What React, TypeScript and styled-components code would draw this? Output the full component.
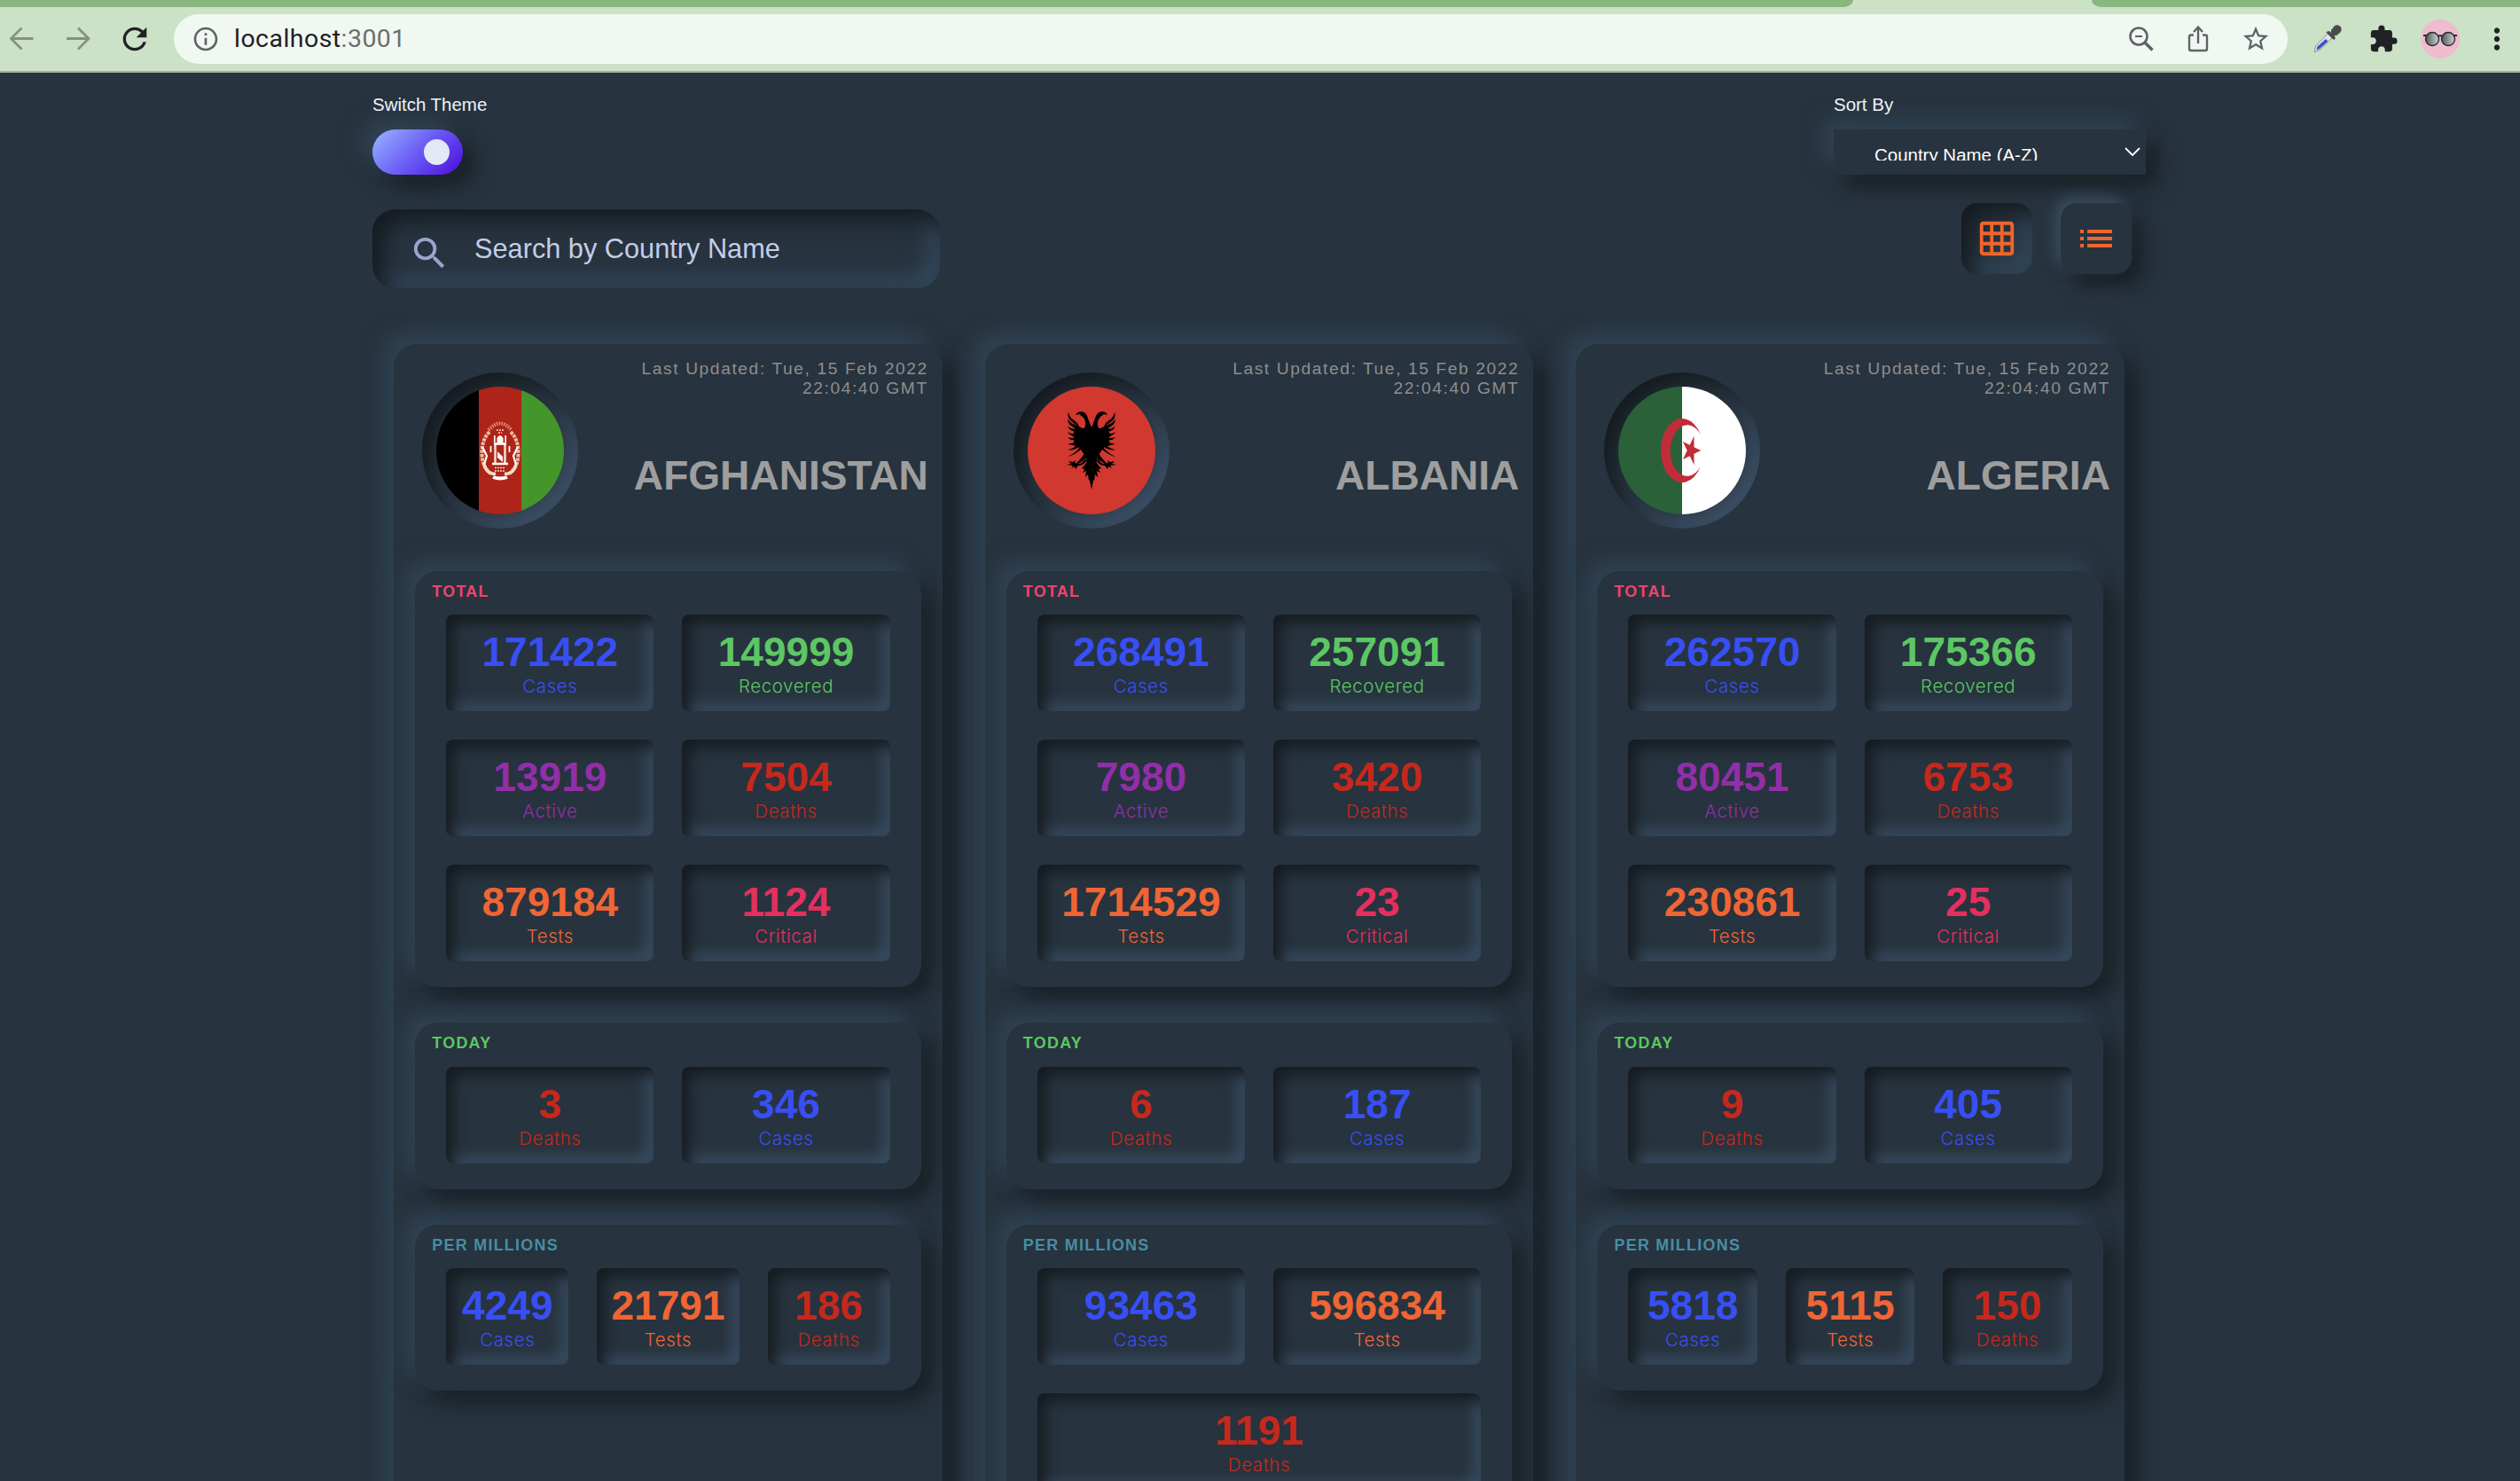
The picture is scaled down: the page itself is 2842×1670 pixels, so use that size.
import React from "react";
import styled, { createGlobalStyle } from "styled-components";
import { MdGridOn, MdList, MdSearch, MdRefresh, MdInfoOutline, MdStarBorder, MdExtension, MdMoreVert } from "react-icons/md";

const BG = "#27333e";
const LIGHT = "#34495e";
const DARK = "#151b20";
const UP = `-12px -12px 24px ${LIGHT}b8, 12px 12px 24px ${DARK}d8`;
const FONT = `"Liberation Sans", Helvetica, Arial, sans-serif`;

const Global = createGlobalStyle`
  * { box-sizing: border-box; }
  body { margin: 0; background: ${BG}; font-family: ${FONT}; }
`;
const Screen = styled.div`
  width: 2842px;
  height: 1670px;
  overflow: hidden;
  background: ${BG};
`;

/* browser chrome */
const TabStrip = styled.div`
  height: 8px;
  background: #cbe2c6;
  display: flex;
  justify-content: space-between;
`;
const TabLeft = styled.div`
  width: 2090px;
  background: #88b880;
  border-bottom-right-radius: 12px 8px;
`;
const TabRight = styled.div`
  width: 483px;
  background: #88b880;
  border-bottom-left-radius: 12px 8px;
`;
const Toolbar = styled.div`
  height: 74px;
  padding: 8px 7px 8px 7px;
  display: flex;
  align-items: center;
  background: #cbe2c6;
  border-bottom: 2px solid #9fb39c;
  svg { display: block; flex: none; }
`;
const NavIcons = styled.div`
  width: 189px;
  display: flex;
  align-items: center;
  gap: 26.5px;
`;
const Address = styled.div`
  width: 2384px;
  height: 56px;
  border-radius: 28px;
  background: #f1f8f1;
  display: flex;
  align-items: center;
  padding: 0 19px 0 20px;
  color: #5f6368;
`;
const Url = styled.div`
  flex: 1;
  margin-left: 16px;
  font: 28.5px/56px Roboto, sans-serif;
  letter-spacing: 0.45px;
  color: #202124;
  span { color: #6b706c; }
`;
const AddressIcons = styled.div`
  display: flex;
  align-items: center;
  gap: 32px;
`;
const Extensions = styled.div`
  flex: 1;
  display: flex;
  align-items: center;
  justify-content: space-between;
  padding-left: 28px;
  color: #202124;
`;
const Shift = styled.span`
  display: flex;
  margin: 0 -3px 0 3px;
`;

/* page */
const Page = styled.main`
  width: 2000px;
  margin-left: 420px;
  padding-top: 24px;
`;
const Row = styled.div`
  display: flex;
  justify-content: space-between;
`;
const Field = styled.div<{ $w: number }>`
  width: ${p => p.$w}px;
`;
const FieldLabel = styled.div`
  height: 40px;
  font-size: 20.48px;
  line-height: 24px;
  color: #eef3fb;
`;
const Toggle = styled.div`
  width: 102px;
  height: 51px;
  border-radius: 26px;
  display: flex;
  align-items: center;
  justify-content: flex-end;
  padding-right: 15px;
  background: linear-gradient(135deg, #95aeff 5%, #6a5cf5 50%, #4f12e0 95%);
  box-shadow: ${UP};
`;
const Knob = styled.div`
  width: 29px;
  height: 29px;
  border-radius: 50%;
  background: #e3e9f5;
`;
const Select = styled.div`
  height: 51px;
  padding: 20px 5px 0 46px;
  display: flex;
  justify-content: space-between;
  background: ${BG};
  box-shadow: ${UP};
  color: #fff;
`;
const SelectText = styled.div`
  height: 15px;
  overflow: hidden;
  font-size: 20.48px;
  line-height: 18px;
`;
const SearchBox = styled.div`
  width: 640px;
  height: 89px;
  margin-top: 39px;
  border-radius: 25.6px;
  padding-left: 41px;
  display: flex;
  align-items: center;
  color: #c3cde9;
  font-size: 30.72px;
  box-shadow: inset 12px 12px 24px ${DARK}, inset -12px -12px 24px ${LIGHT};
  svg { color: #98a6cf; margin: 9px 27px 0 0; }
`;
const ViewButtons = styled.div`
  display: flex;
  gap: 32px;
  margin: 32px 16px 0 0;
`;
const ViewButton = styled.div<{ $on?: boolean }>`
  width: 80px;
  height: 80px;
  border-radius: 18px;
  display: flex;
  align-items: center;
  justify-content: center;
  color: #f0652c;
  background: ${BG};
  box-shadow: ${p => p.$on
    ? `inset 12px 12px 25px ${DARK}, inset -12px -12px 25px ${LIGHT}`
    : `-7px -7px 16px #3d5168d8, 12px 12px 22px ${DARK}d8`};
`;
const Cards = styled.div`
  display: grid;
  grid-template-columns: repeat(3, 618.7px);
  gap: 47.9px;
  padding: 0 24.1px;
  margin-top: 63px;
`;
const CardBox = styled.article`
  height: 1500px;
  border-radius: 25.6px;
  padding: 0 24px;
  background: ${BG};
  box-shadow: ${UP};
`;
const CardHead = styled.header`
  height: 256px;
  display: flex;
  justify-content: space-between;
  padding: 32px 0 0 8px;
  margin-right: -8px;
`;
const Ring = styled.div`
  flex: none;
  width: 176px;
  height: 176px;
  border-radius: 50%;
  padding: 16px;
  box-shadow: inset 12px 12px 22px ${DARK}, inset -12px -12px 22px #3d5168;
  svg { display: block; border-radius: 50%; }
`;
const HeadText = styled.div`
  text-align: right;
  margin-top: -15px;
`;
const Updated = styled.div`
  width: 360px;
  margin-left: auto;
  font-size: 19.2px;
  line-height: 22px;
  letter-spacing: 1.6px;
  color: #8e8e8e;
`;
const Country = styled.h1`
  margin: 61px 0 0;
  font-size: 46.08px;
  line-height: 53px;
  font-weight: 700;
  color: #9e9e9e;
`;
const SectionBox = styled.section`
  margin-bottom: 40.2px;
  padding: 12.8px 19.2px;
  border-radius: 25.6px;
  background: ${BG};
  box-shadow: ${UP};
`;
const SectionTitle = styled.h2<{ $c: string }>`
  margin: 0;
  font-size: 17.92px;
  line-height: 20.6px;
  letter-spacing: 1.28px;
  text-transform: uppercase;
  color: ${p => p.$c};
`;
const Tiles = styled.div`
  display: flex;
  flex-wrap: wrap;
`;
const Tile = styled.div<{ $c: string }>`
  flex: 1 1 0;
  height: 109px;
  margin: 16px;
  padding: 16px;
  border-radius: 8px;
  text-align: center;
  color: ${p => p.$c};
  box-shadow: inset 8px 8px 16px ${DARK}, inset -8px -8px 16px #3b4f64;
`;
const Num = styled.div`
  font-size: 46.08px;
  line-height: 53px;
  font-weight: 700;
`;
const Label = styled.div`
  font: 300 20.48px/24px Inter, ${FONT};
  letter-spacing: 0.6px;
`;

const C = {
  Cases: "#384ff5",
  Recovered: "#5cc763",
  Active: "#912fa8",
  Deaths: "#c5281c",
  Tests: "#ef6534",
  Critical: "#e3305f",
};
type Key = keyof typeof C;
type Stat = [Key, number];

const Section = ({ title, color, stats }: { title: string; color: string; stats: Stat[] }) => (
  <SectionBox>
    <SectionTitle $c={color}>{title}</SectionTitle>
    <Tiles>
      {stats.map(([k, n]) => (
        <Tile key={k} $c={C[k]}>
          <Num>{n}</Num>
          <Label>{k}</Label>
        </Tile>
      ))}
    </Tiles>
  </SectionBox>
);

const Afghanistan = () => (
  <svg width="144" height="144" viewBox="0 0 144 144">
    <path fill="#000" d="M0 0h48v144H0z" />
    <path fill="#af2418" d="M48 0h48v144H48z" />
    <path fill="#44962b" d="M96 0h48v144H96z" />
    <g fill="none" stroke="#f3dccb">
      <path d="M60 51Q51 60 51.500 76T62 98M84 51q9 9 8.500 25T82 98" strokeWidth="4" strokeDasharray="3.500 1" stroke="#e8bfa0" />
      <path d="M52 68l5 10-3 10M92 68l-5 10 3 10" strokeWidth="2.200" stroke="#fff" />
      <path d="M59 49q13-15 26 0" strokeWidth="4" strokeDasharray="1.600 1.200" stroke="#dd8f7d" />
      <path d="M68 49h8M70 52h4" strokeWidth="1.600" strokeDasharray="2 1" />
      <path d="M66.500 64v22M77.500 64v22" strokeWidth="2.600" />
      <path d="M63 87h18M65 64.500h14" strokeWidth="2.600" stroke="#fff" />
      <path d="M66 91.500h12M66 95h12" strokeWidth="1.400" strokeDasharray="2 1" />
      <path d="M54 88q4 12 13 10M90 88q-4 12-13 10" strokeWidth="3.500" />
      <path d="M64 102q8 3 16 0" strokeWidth="4" stroke="#fff" />
      <path d="M61.500 67v7M82.500 67v7" strokeWidth="1.800" stroke="#fff" />
    </g>
    <path fill="#fff" d="M68.500 63.500V58q3.500-6 7 0v5.500zM69 73l6 6v6l-6-5zM65 55h1.600v8H65zM77.400 55H79v8h-1.600z" />
  </svg>
);

const EagleHalf = () => (
  <g>
    <path d="M72 46l-4-10q-2-8-8-8-4 0-6 4l4-1 4 3q4 4 3 9 0 4-3 4l-4-2-3-6v14q2 10 8 16l3 2q-4 9-11 15l2 1q6-3 11-9l-1 7q-3 4-6 7l3 1 3-3-1 5 3-1-1 6 2 0 3 9V50z" />
    <path d="M46 29q-3 8 9 14l-1-4q-7-4-8-10zM45 36q0 9 11 11v-3q-8-2-11-8zM45 44q2 7 11 7v-3q-8 0-11-4zM45 51q3 6 12 5l-1-3q-7 1-11-2zM45 57q4 5 13 3l-2-3q-6 2-11 0zM45 64q5 4 14 0l-2-3q-6 4-12 3zM45 71q7 2 16-5l-3-2q-6 6-13 7zM45 79q9-2 18-11l-3-1q-7 9-15 12z" />
    <path d="M52 40l4 8v20l-5-2 2-8-3-3 3-5z" />
    <path d="M44 88l5-1-3-3 5 1 3-2-1 3 6 1q4-2 6-6l1 3q-3 5-9 5l-3 4-1-3-4 2 2-3z" />
  </g>
);
const Albania = () => (
  <svg width="144" height="144" viewBox="0 0 144 144">
    <path fill="#d13830" d="M0 0h144v144H0z" />
    <EagleHalf />
    <g transform="matrix(-1 0 0 1 144 0)"><EagleHalf /></g>
    <path d="M56 47l8 3 8-5 8 5 8-3v19l-9 12-4 20q-1 10-3 18-2-8-3-18l-4-20-9-12z" />
    <path d="M62 97l5-9 5 4 5-4 5 9-4-2 1 7-3-3-1 7-3-3-3 3-1-7-3 3 1-7z" />
  </svg>
);
const Algeria = () => (
  <svg width="144" height="144" viewBox="0 0 144 144">
    <path fill="#2a6138" d="M0 0h72v144H0z" />
    <path fill="#fff" d="M72 0h72v144H72z" />
    <path fill="#c22c3a" d="M92.800 54A24 36 0 1 0 92.800 90A19.200 28.800 0 1 1 92.800 54Z" />
    <path fill="#c22c3a" d="M93.300 72L85.500 75.800V88.300L80.700 78.200L72.900 82.100L77.700 72L72.900 61.900L80.700 65.800L85.500 55.700V68.200Z" />
  </svg>
);

const cards: { name: string; flag: React.ReactNode; total: Stat[]; today: Stat[]; perM: Stat[] }[] = [
  {
    name: "AFGHANISTAN",
    flag: <Afghanistan />,
    total: [["Cases", 171422], ["Recovered", 149999], ["Active", 13919], ["Deaths", 7504], ["Tests", 879184], ["Critical", 1124]],
    today: [["Deaths", 3], ["Cases", 346]],
    perM: [["Cases", 4249], ["Tests", 21791], ["Deaths", 186]],
  },
  {
    name: "ALBANIA",
    flag: <Albania />,
    total: [["Cases", 268491], ["Recovered", 257091], ["Active", 7980], ["Deaths", 3420], ["Tests", 1714529], ["Critical", 23]],
    today: [["Deaths", 6], ["Cases", 187]],
    perM: [["Cases", 93463], ["Tests", 596834], ["Deaths", 1191]],
  },
  {
    name: "ALGERIA",
    flag: <Algeria />,
    total: [["Cases", 262570], ["Recovered", 175366], ["Active", 80451], ["Deaths", 6753], ["Tests", 230861], ["Critical", 25]],
    today: [["Deaths", 9], ["Cases", 405]],
    perM: [["Cases", 5818], ["Tests", 5115], ["Deaths", 150]],
  },
];

const Arrow = ({ flip }: { flip?: boolean }) => (
  <svg width="36" height="36" viewBox="0 0 36 36" fill="none" stroke="#84937f" strokeWidth="2.800">
    <path d={flip ? "M5 17.500H29.500M18 5.500L30 17.500 18 29.500" : "M30.500 17.500H6M17.500 5.500L5.500 17.500 17.500 29.500"} />
  </svg>
);
const ZoomOut = () => (
  <svg width="32" height="32" viewBox="0 0 32 32" fill="none" stroke="#5f6368" strokeWidth="2.600">
    <circle cx="13" cy="13" r="9.500" /><path d="M20 20l8.500 8.500" strokeWidth="3.500" /><path d="M9 13h8" strokeWidth="2" />
  </svg>
);
const Share = () => (
  <svg width="32" height="32" viewBox="0 0 32 32" fill="none" stroke="#5f6368" strokeWidth="2.400">
    <path d="M11 11.500H8q-2 0-2 2V27q0 2 2 2h16q2 0 2-2V13.500q0-2-2-2h-3M16 21V3M11 8l5-5.500L21 8" />
  </svg>
);
const Dropper = () => (
  <svg width="34" height="34" viewBox="0 0 34 34">
    <path d="M2 32l1.500-7L17 11l5 5L8.500 29z" fill="#dfe3e6" stroke="#8d9188" />
    <path d="M4.500 29.500l1-4L15 17l2.500 2.500-9.500 8.500z" fill="#3451d8" />
    <path d="M15 9l9 9 2-2-1.500-3H27l4-3q3-4 .5-7t-6.500-1l-4 5v3l-2-2z" fill="#4a4b4d" />
  </svg>
);
const Avatar = () => (
  <svg width="44" height="44" viewBox="0 0 44 44">
    <defs>
      <linearGradient id="lens" x1="0" x2="1" y1="0" y2="0">
        <stop offset="0" stopColor="#4d5558" />
        <stop offset="1" stopColor="#cfd6d6" />
      </linearGradient>
    </defs>
    <circle cx="22" cy="22" r="22" fill="#efbccf" />
    <path d="M3 18h5M36 18h5M19 19q3-1.500 6 0" stroke="#2b2b2b" strokeWidth="2" fill="none" />
    <circle cx="13" cy="22" r="7.500" fill="url(#lens)" stroke="#2b2b2b" strokeWidth="1.400" />
    <circle cx="31" cy="22" r="7.500" fill="url(#lens)" stroke="#2b2b2b" strokeWidth="1.400" />
  </svg>
);

export default function App() {
  return (
    <Screen>
      <Global />
      <TabStrip><TabLeft /><TabRight /></TabStrip>
      <Toolbar>
        <NavIcons><Arrow /><Arrow flip /><MdRefresh size={40} color="#202124" /></NavIcons>
        <Address>
          <MdInfoOutline size={32} />
          <Url>localhost<span>:3001</span></Url>
          <AddressIcons><ZoomOut /><Share /><MdStarBorder size={34} /></AddressIcons>
        </Address>
        <Extensions>
          <Dropper />
          <Shift><MdExtension size={34} /></Shift>
          <Shift><Avatar /></Shift>
          <MdMoreVert size={38} />
        </Extensions>
      </Toolbar>
      <Page>
        <Row>
          <Field $w={300}>
            <FieldLabel>Switch Theme</FieldLabel>
            <Toggle><Knob /></Toggle>
          </Field>
          <Field $w={352}>
            <FieldLabel>Sort By</FieldLabel>
            <Select>
              <SelectText>Country Name (A-Z)</SelectText>
              <svg width="20" height="12" viewBox="0 0 20 12" fill="none" stroke="#fff" strokeWidth="1.800"><path d="M2 1l8 8 8-8" /></svg>
            </Select>
          </Field>
        </Row>
        <Row>
          <SearchBox><MdSearch size={47} />Search by Country Name</SearchBox>
          <ViewButtons>
            <ViewButton $on><MdGridOn size={46} /></ViewButton>
            <ViewButton><MdList size={48} /></ViewButton>
          </ViewButtons>
        </Row>
        <Cards>
          {cards.map(c => (
            <CardBox key={c.name}>
              <CardHead>
                <Ring>{c.flag}</Ring>
                <HeadText>
                  <Updated>Last Updated: Tue, 15 Feb 2022 22:04:40 GMT</Updated>
                  <Country>{c.name}</Country>
                </HeadText>
              </CardHead>
              <Section title="Total" color="#ee4470" stats={c.total} />
              <Section title="Today" color="#5cc763" stats={c.today} />
              <Section title="Per Millions" color="#468ea5" stats={c.perM} />
            </CardBox>
          ))}
        </Cards>
      </Page>
    </Screen>
  );
}
